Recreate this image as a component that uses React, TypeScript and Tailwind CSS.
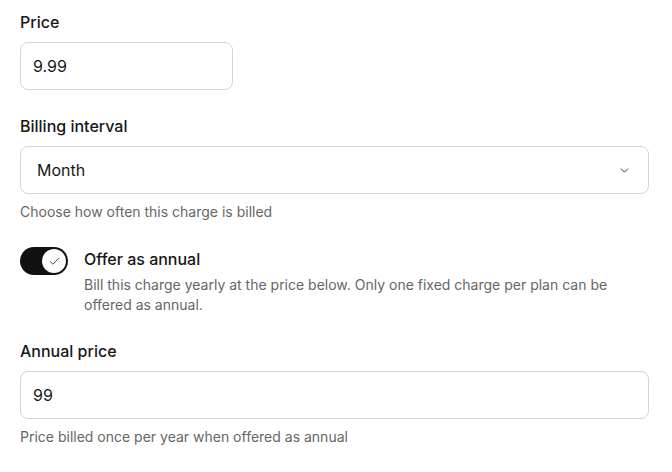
import { ChevronDown, Check } from 'lucide-react'

// 가격 설정 폼 — 가격, 청구 주기, 연간 옵션
function Label({ children }: { children: React.ReactNode }) {
  return <p className="text-base font-medium leading-6 text-[#171717]">{children}</p>
}

function Help({ children }: { children: React.ReactNode }) {
  return <p className="mt-2 text-sm leading-5 text-[#666]">{children}</p>
}

export default function App() {
  return (
    <div
      className="bg-white min-h-[472px] pl-5 pr-[23px] pt-[10px]"
      style={{ fontFamily: 'Inter, "Noto Sans", sans-serif' }}
    >
      <div className="flex flex-col">
        {/* 가격 */}
        <Label>Price</Label>
        <div className="mt-2 w-[213px] h-[48px] border border-[#d4d4d4] rounded-lg flex items-center px-3 text-base text-[#171717]">
          9.99
        </div>

        {/* 청구 주기 */}
        <div className="mt-6">
          <Label>Billing interval</Label>
          <div className="mt-2 h-[48px] border border-[#d4d4d4] rounded-lg flex items-center justify-between pl-4 pr-[17px] text-base text-[#171717]">
            <span>Month</span>
            <ChevronDown size={13} strokeWidth={1.75} className="text-[#333]" />
          </div>
          <Help>Choose how often this charge is billed</Help>
        </div>

        {/* 연간 옵션 토글 */}
        <div className="mt-[25px] flex gap-4">
          <div className="shrink-0 w-12 h-7 rounded-full bg-[#111] flex items-center justify-end pr-[2px]">
            <div className="w-6 h-6 rounded-full bg-white flex items-center justify-center">
              <Check size={13} strokeWidth={1.75} className="text-[#444]" />
            </div>
          </div>
          <div className="flex flex-col">
            <p className="text-base font-medium leading-6 text-[#171717]">Offer as annual</p>
            <p className="mt-1 text-sm leading-5 text-[#666]">
              Bill this charge yearly at the price below. Only one fixed charge per plan can be offered as annual.
            </p>
          </div>
        </div>

        {/* 연간 가격 */}
        <div className="mt-6">
          <Label>Annual price</Label>
          <div className="mt-2 h-[48px] border border-[#d4d4d4] rounded-lg flex items-center px-3 text-base text-[#171717]">
            99
          </div>
          <Help>Price billed once per year when offered as annual</Help>
        </div>
      </div>
    </div>
  )
}
